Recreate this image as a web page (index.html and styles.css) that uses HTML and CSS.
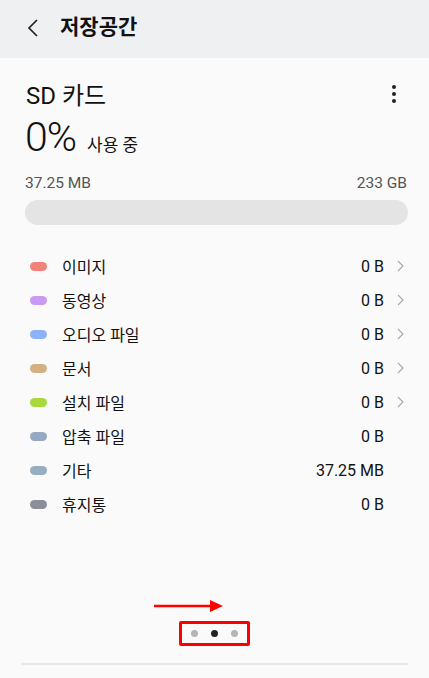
FILE: index.html
```html
<!DOCTYPE html>
<html lang="ko">
  <head>
    <meta charset="UTF-8" />
    <meta name="viewport" content="width=device-width, initial-scale=1.0" />
    <link rel="stylesheet" href="styles.css">
    <title>저장공간</title>
  </head>
  <body>
    <div class="appbar">
      <svg class="back" width="12" height="20" viewBox="0 0 12 20">
        <polyline points="10,2 2,10 10,18" fill="none" stroke="#222" stroke-width="1.7" />
      </svg>
      <div class="appbar-title">저장공간</div>
    </div>

    <div class="page">
      <div class="card-head">
        <div class="card-title">SD 카드</div>
        <svg class="more" width="6" height="20" viewBox="0 0 6 20">
          <circle cx="3" cy="3" r="2" fill="#222" />
          <circle cx="3" cy="10" r="2" fill="#222" />
          <circle cx="3" cy="17" r="2" fill="#222" />
        </svg>
      </div>
      <div class="usage">
        <span class="percent">0%</span>
        <span class="usage-label">사용 중</span>
      </div>
      <div class="sizes">
        <span>37.25 MB</span>
        <span>233 GB</span>
      </div>
      <div class="bar"></div>

      <ul class="list">
        <li class="row"><span class="pill image"></span><span class="name">이미지</span><span class="value">0 B</span><span class="chev"><svg width="7" height="12" viewBox="0 0 7 12"><polyline points="1,1 6,6 1,11" fill="none" stroke="#aaa" stroke-width="1.2" /></svg></span></li>
        <li class="row"><span class="pill video"></span><span class="name">동영상</span><span class="value">0 B</span><span class="chev"><svg width="7" height="12" viewBox="0 0 7 12"><polyline points="1,1 6,6 1,11" fill="none" stroke="#aaa" stroke-width="1.2" /></svg></span></li>
        <li class="row"><span class="pill audio"></span><span class="name">오디오 파일</span><span class="value">0 B</span><span class="chev"><svg width="7" height="12" viewBox="0 0 7 12"><polyline points="1,1 6,6 1,11" fill="none" stroke="#aaa" stroke-width="1.2" /></svg></span></li>
        <li class="row"><span class="pill doc"></span><span class="name">문서</span><span class="value">0 B</span><span class="chev"><svg width="7" height="12" viewBox="0 0 7 12"><polyline points="1,1 6,6 1,11" fill="none" stroke="#aaa" stroke-width="1.2" /></svg></span></li>
        <li class="row"><span class="pill apk"></span><span class="name">설치 파일</span><span class="value">0 B</span><span class="chev"><svg width="7" height="12" viewBox="0 0 7 12"><polyline points="1,1 6,6 1,11" fill="none" stroke="#aaa" stroke-width="1.2" /></svg></span></li>
        <li class="row"><span class="pill zip"></span><span class="name">압축 파일</span><span class="value">0 B</span><span class="chev"></span></li>
        <li class="row"><span class="pill etc"></span><span class="name">기타</span><span class="value">37.25 MB</span><span class="chev"></span></li>
        <li class="row"><span class="pill trash"></span><span class="name">휴지통</span><span class="value">0 B</span><span class="chev"></span></li>
      </ul>

      <div class="pager">
        <svg class="arrow" width="70" height="14" viewBox="0 0 70 14">
          <line x1="0" y1="7" x2="58" y2="7" stroke="#f00" stroke-width="2.5" />
          <polygon points="56,1 69,7 56,13" fill="#f00" />
        </svg>
        <div class="dots">
          <span class="dot"></span>
          <span class="dot on"></span>
          <span class="dot"></span>
        </div>
      </div>
      <div class="divider"></div>
    </div>
  </body>
</html>
```

FILE: styles.css
```css
body {
    margin: 0;
    background: #fafafa;
    font-family: Roboto, "Noto Sans CJK KR", sans-serif;
    color: #111;
}
.appbar {
    height: 58px;
    background: #eef0f1;
    display: flex;
    align-items: center;
    padding-left: 27px;
    gap: 21px;
}
.back {
    margin-top: -2px;
}
.appbar-title {
    font-size: 21px;
    font-weight: 700;
    color: #111;
    margin-top: -8px;
}
.page {
    padding: 0 21px 0 21px;
}
.card-head {
    display: flex;
    justify-content: space-between;
    align-items: center;
    padding: 23px 11px 0 5px;
}
.card-title {
    font-size: 24px;
    line-height: 30px;
}
.more {
    margin-top: -4px;
}
.usage {
    display: flex;
    align-items: baseline;
    gap: 11px;
    padding-left: 4px;
    margin-top: 3px;
}
.percent {
    font-size: 41px;
    font-weight: 300;
    line-height: 46px;
    letter-spacing: -1px;
}
.usage-label {
    font-size: 17px;
}
.sizes {
    display: flex;
    justify-content: space-between;
    font-size: 15.5px;
    color: #555;
    padding: 0 1px 0 4px;
    margin-top: 13px;
    line-height: 20px;
}
.bar {
    height: 25px;
    border-radius: 13px;
    background: #e4e4e4;
    margin: 7px 0 0 4px;
    width: 383px;
}
.list {
    list-style: none;
    margin: 24px 0 0 0;
    padding: 0;
}
.row {
    display: flex;
    align-items: center;
    height: 34px;
    font-size: 16px;
}
.pill {
    width: 17px;
    height: 9px;
    border-radius: 5px;
    margin-left: 9px;
    margin-right: 15px;
}
.image { background: #f3837a; }
.video { background: #c99af2; }
.audio { background: #8eb2fa; }
.doc { background: #d2b284; }
.apk { background: #a9d93a; }
.zip { background: #96a9c2; }
.etc { background: #96aebf; }
.trash { background: #8c8e99; }
.name {
    flex: 1;
}
.value {
    font-size: 16px;
}
.chev {
    width: 24px;
    display: flex;
    justify-content: flex-end;
    padding-right: 4px;
    box-sizing: border-box;
}
.pager {
    position: relative;
    height: 80px;
    margin-top: 88px;
}
.arrow {
    position: absolute;
    left: 133px;
    top: -10px;
}
.dots {
    position: absolute;
    left: 158px;
    top: 12px;
    width: 65px;
    height: 19px;
    border: 3px solid #f00;
    border-radius: 2px;
    display: flex;
    justify-content: center;
    align-items: center;
    gap: 13px;
}
.dot {
    width: 7px;
    height: 7px;
    border-radius: 50%;
    background: #b4b4b4;
}
.dot.on {
    background: #222;
}
.divider {
    height: 2px;
    background: #e8e8e8;
    margin-top: -26px;
}
```
